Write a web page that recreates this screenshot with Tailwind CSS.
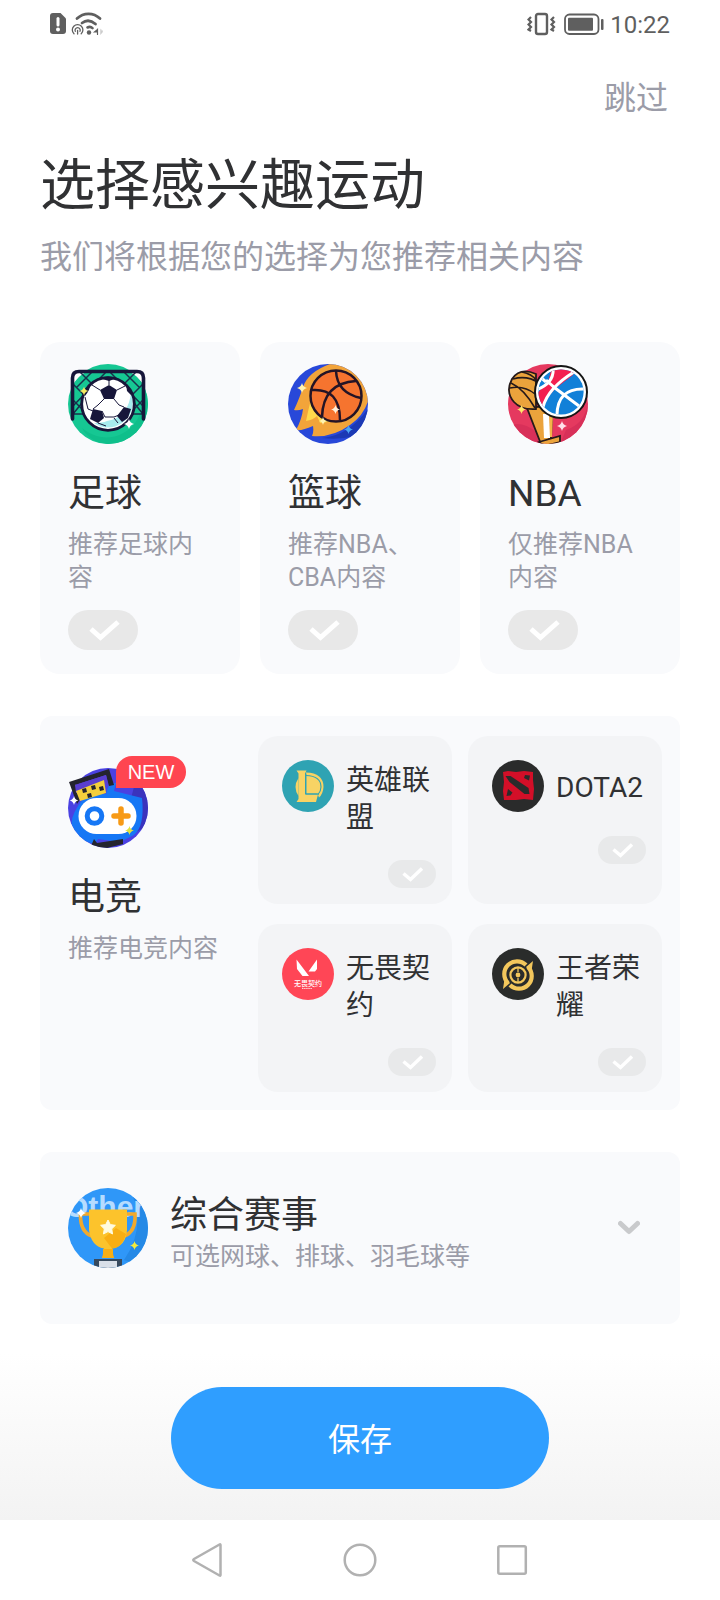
<!DOCTYPE html>
<html lang="zh-CN">
<head>
<meta charset="utf-8">
<meta name="viewport" content="width=device-width, initial-scale=1">
<title>选择感兴趣运动</title>
<script src="https://cdn.jsdelivr.net/npm/@tailwindcss/browser@4"></script>
</head>
<body class="min-h-screen flex flex-col bg-white text-[#303133] font-['Roboto','Noto_Sans_CJK_SC',sans-serif]">

<!-- shared shapes -->
<svg class="absolute size-0" aria-hidden="true">
  <symbol id="spark" viewBox="-5 -5 10 10"><path d="M0-5Q.9-.9 5 0Q.9.9 0 5Q-.9.9-5 0Q-.9-.9 0-5Z" fill="currentColor"/></symbol>
  <clipPath id="disc"><circle cx="40" cy="40" r="40"/></clipPath>
</svg>

<!-- status bar -->
<div class="flex h-12 items-center justify-between pl-12 pr-[50px] text-[#5f5f5f]">
  <div class="flex items-center gap-1">
    <svg class="h-6 w-[19px]" viewBox="0 0 19 24" aria-hidden="true">
      <path d="M5 1h7.500l5.500 5.500V19a3 3 0 0 1-3 3H5a3 3 0 0 1-3-3V4a3 3 0 0 1 3-3z" fill="currentColor"/>
      <path d="M10 6.500v6.500" stroke="#fff" stroke-width="3" stroke-linecap="round"/><circle cx="10" cy="17.500" r="2" fill="#fff"/>
    </svg>
    <svg class="h-6 w-8" viewBox="0 0 32 24" fill="none" stroke="currentColor" stroke-linecap="round" aria-hidden="true">
      <path d="M6 6.500C12.500 .2 22.500 .2 29 6.500" stroke-width="2.800"/>
      <path d="M11 11c4-3 9-2.800 13.500 1" stroke-width="2.800"/>
      <path d="M16.500 15.500c2-1 3.500-.8 5 .6" stroke-width="2.600"/>
      <circle cx="18" cy="20.500" r="2.200" fill="currentColor" stroke="none"/>
      <path d="M3 21.800A5.300 5.300 0 1 1 10.200 21.800" stroke-width="1.300"/>
      <path d="M4.300 19.300A2.600 2.600 0 1 1 9 19.300M6.600 18.500v3.500" stroke-width="1.300"/>
      <path d="M26.500 17v5.500M23.500 20l3-2.500v2.500z" stroke-width="1.200" fill="currentColor"/>
      <path d="M29.500 17.500v5l2.500-3z" stroke="#ccc" fill="#ccc" stroke-width=".5"/>
    </svg>
  </div>
  <div class="flex items-center gap-1.5">
    <svg class="h-6 w-[31px]" viewBox="0 0 31 24" fill="none" stroke="currentColor" aria-hidden="true">
      <rect x="9" y="2" width="11" height="20" rx="2" stroke-width="2.400"/>
      <path d="M4 5L1.500 7.500L4 10L1.500 12.500L4 15L1.500 17.500L4 19" stroke-width="2.200"/>
      <path d="M27 5l-2.500 2.500L27 10l-2.500 2.500L27 15l-2.500 2.500L27 19" stroke-width="2.200"/>
    </svg>
    <svg class="h-6 w-10" viewBox="0 0 40 24" aria-hidden="true">
      <rect x="1" y="2.500" width="33.500" height="19.500" rx="4.500" fill="none" stroke="currentColor" stroke-width="1.800"/>
      <rect x="4" y="5.800" width="25" height="13" rx="1" fill="currentColor"/>
      <rect x="37" y="7" width="2.500" height="11" rx="1" fill="currentColor"/>
    </svg>
    <span class="pt-0.5 text-2xl leading-6">10:22</span>
  </div>
</div>

<main class="px-10 pt-[30px]">
  <div class="flex justify-end pr-3">
    <button type="button" class="text-[32px] leading-10 text-[#9b9ca8]">跳过</button>
  </div>
  <h1 class="mt-[35px] text-[55px] leading-16">选择感兴趣运动</h1>
  <p class="mt-5 text-[32px] leading-10 text-[#9b9ca8]">我们将根据您的选择为您推荐相关内容</p>

  <div class="mt-[65px] grid grid-cols-3 gap-5">
    <!-- football -->
    <label class="flex flex-col items-start rounded-[20px] bg-[#f9fafc] px-7 pb-6 pt-[22px]">
      <svg class="size-20" viewBox="0 0 80 80" aria-hidden="true">
        <circle cx="40" cy="40" r="40" fill="#16c793"/>
        <g clip-path="url(#disc)"><path d="M66 6c12 16 14 44-6 60c-16 12-34 8-46-2c8 16 32 22 50 10s24-46 2-68z" fill="#0fbf8b"/></g>
        <path d="M5 15V10q0-2 3-2h10Q10 12 5 20zM75 15V10q0-2-3-2H62q8 4 13 12z" fill="#fff"/>
        <g fill="none" stroke="#18304b" stroke-width="1.500">
          <path d="M12 8L30 26M24 8L8 24M38 8L5 42M5 20l18 18M5 36l16 16M18 34L5 50M68 8L50 26M56 8l16 16M42 8l33 34M75 20L57 38M75 36L59 52M62 34l13 16M5 50h14M75 50H61"/>
        </g>
        <path d="M4.500 55V14Q4.500 7.500 11 7.500H69Q75.500 7.500 75.500 14V55" fill="none" stroke="#17163a" stroke-width="3.600" stroke-linecap="round"/>
        <circle cx="40" cy="40" r="26" fill="#fff"/>
        <path d="M63 28q6 20-9 31q-14 9-28 0q8 0 13-2q22-4 24-29z" fill="#a7ebee"/>
        <g fill="#17163a">
          <path d="M41 21l8 5-3 9H36l-4-9z"/><path d="M25 45l9 2 2 7-6 5-8-4z"/><path d="M56 43l7 2-3 9-6 4-5-6z"/><path d="M15 30l5-9 3-2q-1 7-6 13zM58 20q6 6 6 12l-5-5zM31 14q9-3 18 0l-8 3z"/>
        </g>
        <path d="M36 35l-6 6-5 4M46 35l5 6 5 2M34 47l3 6h9l5-2M32 26l-8-5M49 26l8-4M41 21v-5M30 59l8 3M46 54l4 5M17 33l3 12 5 2" fill="none" stroke="#17163a" stroke-width="1"/>
        <circle cx="40" cy="40" r="26.300" fill="none" stroke="#17163a" stroke-width="2.800"/>
        <use href="#spark" x="11.500" y="22.500" width="9" height="9" color="#f5e960"/>
        <use href="#spark" x="56" y="55" width="10" height="10" color="#fff"/>
      </svg>
      <span class="mt-[26px] text-[37px] leading-12">足球</span>
      <span class="mt-2.5 text-[25px] leading-[33px] text-[#9b9ca8]">推荐足球内容</span>
      <span class="mt-4 grid h-10 w-[70px]">
        <input type="checkbox" class="col-start-1 row-start-1 appearance-none rounded-full bg-[#e8e8e8] checked:bg-[#2f9eff]">
        <svg class="pointer-events-none col-start-1 row-start-1 size-full" viewBox="0 0 70 40" fill="none" stroke="#fff" stroke-width="5" aria-hidden="true"><path d="M23 19l9.500 8.500L50 12"/></svg>
      </span>
    </label>

    <!-- basketball -->
    <label class="flex flex-col items-start rounded-[20px] bg-[#f9fafc] px-7 pb-6 pt-[22px]">
      <svg class="size-20" viewBox="0 0 80 80" aria-hidden="true">
        <g clip-path="url(#disc)">
          <rect width="80" height="80" fill="#2848d9"/>
          <path d="M80 45Q60 72 34 74Q52 76 66 72L80 60z" fill="#1c39b4"/>
          <path d="M42 0Q20 8 15 23Q12 33 6 46q4 1 9-1q-1 10-7 21q6 1 17-4q1 6-1 10q20 2 38-11Q78 50 82 30L70 8Q60-2 42 0z" fill="#f2a43a"/>
          <path d="M23 35q-3 12-5 22q7-1 11-5q2 4 3 7q7 0 13-3z" fill="#ffd94b"/>
        </g>
        <circle cx="48" cy="32" r="25.500" fill="#f6742f" stroke="#241426" stroke-width="2.500"/>
        <path d="M24 26q28-2 28 30M73 34Q49 29 48 7M68 17Q35 19 34 53" fill="none" stroke="#241426" stroke-width="2.500"/>
        <use href="#spark" x="9" y="19" width="10" height="10" color="#fff3b0"/>
        <use href="#spark" x="43" y="41" width="9" height="9" color="#fff0d8"/>
        <use href="#spark" x="31" y="53" width="8" height="8" color="#fff3b0"/>
        <use href="#spark" x="56" y="61" width="9" height="9" color="#4aa5f5"/>
      </svg>
      <span class="mt-[26px] text-[37px] leading-12">篮球</span>
      <span class="mt-2.5 text-[25px] leading-[33px] text-[#9b9ca8]">推荐NBA、CBA内容</span>
      <span class="mt-4 grid h-10 w-[70px]">
        <input type="checkbox" class="col-start-1 row-start-1 appearance-none rounded-full bg-[#e8e8e8] checked:bg-[#2f9eff]">
        <svg class="pointer-events-none col-start-1 row-start-1 size-full" viewBox="0 0 70 40" fill="none" stroke="#fff" stroke-width="5" aria-hidden="true"><path d="M23 19l9.500 8.500L50 12"/></svg>
      </span>
    </label>

    <!-- NBA -->
    <label class="flex flex-col items-start rounded-[20px] bg-[#f9fafc] px-7 pb-6 pt-[22px]">
      <svg class="size-20" viewBox="0 0 80 80" aria-hidden="true">
        <g clip-path="url(#disc)">
          <rect width="80" height="80" fill="#e5395f"/>
          <path d="M0 62q14-6 28 6l4 14H0zM80 40q-4 20-22 26l-6 14h28z" fill="#d83059"/>
          <path d="M19 44l18-2 7 12-1 20-10 6z" fill="#eba33c" stroke="#261a1a" stroke-width="1.800"/>
          <path d="M35 50h6l1 24h-6z" fill="#fff"/><path d="M42 50l3 0-1 23h-2z" fill="#f5b549"/>
          <path d="M31 78L52 72v6L36 82z" fill="#eba33c" stroke="#261a1a" stroke-width="1.800"/>
        </g>
        <path d="M28 10Q12 3 4 15Q-3 28 6 38q7 8 22 7z" fill="#eba33c" stroke="#261a1a" stroke-width="1.800"/>
        <path d="M5 15q14-4 26 4M2 24q14-3 25 6M3 19q13 6 24 25M14 8q10 2 14 8" fill="none" stroke="#261a1a" stroke-width="1.600"/>
        <circle cx="53" cy="28" r="26" fill="#fff" stroke="#151515" stroke-width="2"/>
        <clipPath id="nbaBall"><circle cx="53" cy="28" r="22.600"/></clipPath>
        <g clip-path="url(#nbaBall)">
          <rect x="28" y="3" width="50" height="50" fill="#1180d8"/>
          <path d="M44 3h24l-3 8L48 24l-9 10-5 10-8-10 14-18z" fill="#f31f50"/>
          <path d="M30 8l13-3-3 14-12 8z" fill="#1180d8"/>
          <path d="M38 16l9 8 28 21M66 8Q40 24 35 43M45 3q2 16-17 23M78 25Q48 23 49 54M30 11l8 7" fill="none" stroke="#fff" stroke-width="3"/>
        </g>
        <use href="#spark" x="9" y="41" width="9" height="9" color="#ffe66b"/>
        <use href="#spark" x="49" y="57" width="10" height="10" color="#ffe1ea"/>
      </svg>
      <span class="mt-[26px] text-[37px] leading-12">NBA</span>
      <span class="mt-2.5 text-[25px] leading-[33px] text-[#9b9ca8]">仅推荐NBA内容</span>
      <span class="mt-4 grid h-10 w-[70px]">
        <input type="checkbox" class="col-start-1 row-start-1 appearance-none rounded-full bg-[#e8e8e8] checked:bg-[#2f9eff]">
        <svg class="pointer-events-none col-start-1 row-start-1 size-full" viewBox="0 0 70 40" fill="none" stroke="#fff" stroke-width="5" aria-hidden="true"><path d="M23 19l9.500 8.500L50 12"/></svg>
      </span>
    </label>
  </div>

  <!-- esports -->
  <section class="mt-[42px] flex rounded-xl bg-[#f9fafc] pb-[18px] pl-7 pr-[18px] pt-5">
    <div class="w-[190px] shrink-0 pt-8">
      <div class="relative w-20">
        <svg class="size-20" viewBox="0 0 80 80" aria-hidden="true">
          <g clip-path="url(#disc)">
            <rect width="80" height="80" fill="#4a41e2"/>
            <path d="M70 4l12 20-2 34-12 6-6-30z" fill="#3a33bd"/>
            <path d="M30 26h8q2-12 10-11l-2 8 28 7q3 28-8 37L52 74 30 71 27 76Q8 72 4 60Q2 50 10 38Q14 29 30 26z" fill="#1677f5"/>
            <path d="M26 71l3 4 26-4v5l-24 6-8-4z" fill="#24242e"/>
          </g>
          <path d="M1 14L41 1l5 16-5 1-3-11L7 17l6 13-4 6z" fill="#24242e"/>
          <path d="M7 17l31-10 2 9-32 9z" fill="#5a3ed0"/>
          <path d="M8 23l28-11 2 13-26 8z" fill="#f4cf3c"/>
          <path d="M14 21l4-1 1 4-4 1zM23 18l4-1 1 4-4 1zM31 19l4-1 1 4-4 1zM19 26l4-1 1 4-4 1z" fill="#24242e"/>
          <rect x="10.500" y="30" width="58" height="36" rx="18" fill="#fff"/>
          <circle cx="26.500" cy="48" r="7.300" fill="none" stroke="#1677f5" stroke-width="5"/>
          <path d="M53 41v14M46 48h14" stroke="#f79a16" stroke-width="5.500" stroke-linecap="round"/>
          <use href="#spark" x="1.500" y="28" width="9" height="9" color="#fff"/>
          <use href="#spark" x="57" y="58" width="9" height="9" color="#e0e23e"/>
        </svg>
        <span class="absolute -top-3 left-12 flex h-8 w-[70px] items-center justify-center rounded-full rounded-bl-none bg-[#ff4550] font-['Liberation_Sans',sans-serif] text-xl text-white">NEW</span>
      </div>
      <h2 class="mt-[26px] text-[37px] leading-12">电竞</h2>
      <p class="mt-2.5 text-[25px] leading-[33px] text-[#9b9ca8]">推荐电竞内容</p>
    </div>
    <div class="grid flex-1 grid-cols-2 gap-x-4 gap-y-5">
      <label class="flex min-h-[168px] flex-col rounded-[20px] bg-[#f3f4f6] pb-4 pl-6 pr-4 pt-6">
        <span class="flex items-start gap-3">
          <svg class="size-[52px] shrink-0" viewBox="0 0 52 52" aria-hidden="true">
            <circle cx="26" cy="26" r="26" fill="#2fa3b3"/>
            <path d="M16.500 18Q10.500 27 16.500 36z" fill="#f8d364"/>
            <path d="M24 12.500Q41.500 13 41.500 27Q41 34 37 37.500L35.500 33.500H24z" fill="#f8d364"/>
            <path d="M24 15.500Q39 16 39 27Q39 31 36 34.500H25" fill="none" stroke="#2fa3b3" stroke-width="1.100"/>
            <path d="M14.500 10.500h10l-1.500 3v21h13L34 42H14.500l2-3V13.500z" fill="#f8d364"/>
            <path d="M24 13.500v20.500H37" fill="none" stroke="#2fa3b3" stroke-width="1"/>
          </svg>
          <span class="flex min-h-[52px] items-center pt-0.5 text-[28px] leading-[37px]">英雄联盟</span>
        </span>
        <span class="mt-6 grid h-7 w-12 self-end">
          <input type="checkbox" class="col-start-1 row-start-1 appearance-none rounded-full bg-[#e8e9ea] checked:bg-[#2f9eff]">
          <svg class="pointer-events-none col-start-1 row-start-1 size-full" viewBox="0 0 48 28" fill="none" stroke="#fff" stroke-width="3.500" aria-hidden="true"><path d="M15.500 13.500l7 6L34 8.500"/></svg>
        </span>
      </label>
      <label class="flex min-h-[168px] flex-col rounded-[20px] bg-[#f3f4f6] pb-4 pl-6 pr-4 pt-6">
        <span class="flex items-start gap-3">
          <svg class="size-[52px] shrink-0" viewBox="0 0 52 52" aria-hidden="true">
            <circle cx="26" cy="26" r="26" fill="#2a2b2b"/>
            <path d="M11 12l5-1 8 1 8-1 9 1 0 8 1 9-1 11-9-1-8 1-12 0-1-9 1-9z" fill="#d30f28"/>
            <path d="M13.500 16l5 0 18 12 1 6-5 0-15-12z" fill="#2a2b2b"/>
            <path d="M33 15l5 .5-1 5-5-2.500zM16 29l4.500 3.500-2 3-4 .5z" fill="#2a2b2b"/>
          </svg>
          <span class="flex min-h-[52px] items-center pt-0.5 text-[28px] leading-[37px]">DOTA2</span>
        </span>
        <span class="mt-6 grid h-7 w-12 self-end">
          <input type="checkbox" class="col-start-1 row-start-1 appearance-none rounded-full bg-[#e8e9ea] checked:bg-[#2f9eff]">
          <svg class="pointer-events-none col-start-1 row-start-1 size-full" viewBox="0 0 48 28" fill="none" stroke="#fff" stroke-width="3.500" aria-hidden="true"><path d="M15.500 13.500l7 6L34 8.500"/></svg>
        </span>
      </label>
      <label class="flex min-h-[168px] flex-col rounded-[20px] bg-[#f3f4f6] pb-4 pl-6 pr-4 pt-6">
        <span class="flex items-start gap-3">
          <svg class="size-[52px] shrink-0" viewBox="0 0 52 52" aria-hidden="true">
            <circle cx="26" cy="26" r="26" fill="#ff4656"/>
            <path d="M14.500 11.500L27 28H20.500L15 21zM35 11.500V21l-2 2.500h-6.500z" fill="#fff"/>
            <text x="26" y="38" text-anchor="middle" font-family="Noto Sans CJK SC" font-weight="500" font-size="7" fill="#fff">无畏契约</text>
            <path d="M20 40.500h10" stroke="#ffd5d9" stroke-width="1.200" stroke-dasharray="1.500 .6"/>
          </svg>
          <span class="flex min-h-[52px] items-center pt-0.5 text-[28px] leading-[37px]">无畏契约</span>
        </span>
        <span class="mt-6 grid h-7 w-12 self-end">
          <input type="checkbox" class="col-start-1 row-start-1 appearance-none rounded-full bg-[#e8e9ea] checked:bg-[#2f9eff]">
          <svg class="pointer-events-none col-start-1 row-start-1 size-full" viewBox="0 0 48 28" fill="none" stroke="#fff" stroke-width="3.500" aria-hidden="true"><path d="M15.500 13.500l7 6L34 8.500"/></svg>
        </span>
      </label>
      <label class="flex min-h-[168px] flex-col rounded-[20px] bg-[#f3f4f6] pb-4 pl-6 pr-4 pt-6">
        <span class="flex items-start gap-3">
          <svg class="size-[52px] shrink-0" viewBox="0 0 52 52" aria-hidden="true">
            <circle cx="26" cy="26" r="26" fill="#2a2c2b"/>
            <g fill="none" stroke="#f3c75c">
              <path d="M16 35A12.500 12.500 0 0 1 34 17" stroke-width="4.200"/>
              <path d="M36 19A12.500 12.500 0 0 1 18 37" stroke-width="4.200"/>
              <circle cx="26" cy="27" r="7.600" stroke-width="2.200"/>
              <path d="M26 20v4M26 30v4" stroke-width="1.300"/>
            </g>
            <path d="M34 19l7-6-1.500 10-3-1zM18 35l-7 6 1.500-10 3 1z" fill="#f3c75c"/>
            <circle cx="26" cy="27" r="2.400" fill="#f3c75c"/>
          </svg>
          <span class="flex min-h-[52px] items-center pt-0.5 text-[28px] leading-[37px]">王者荣耀</span>
        </span>
        <span class="mt-6 grid h-7 w-12 self-end">
          <input type="checkbox" class="col-start-1 row-start-1 appearance-none rounded-full bg-[#e8e9ea] checked:bg-[#2f9eff]">
          <svg class="pointer-events-none col-start-1 row-start-1 size-full" viewBox="0 0 48 28" fill="none" stroke="#fff" stroke-width="3.500" aria-hidden="true"><path d="M15.500 13.500l7 6L34 8.500"/></svg>
        </span>
      </label>
    </div>
  </section>

  <!-- other events -->
  <button type="button" aria-expanded="false" class="mt-[42px] flex w-full items-start gap-[22px] rounded-xl bg-[#f9fafc] pb-[51px] pl-7 pr-10 pt-9 text-left">
    <svg class="size-20 shrink-0" viewBox="0 0 80 80" aria-hidden="true">
      <g clip-path="url(#disc)">
        <rect width="80" height="80" fill="#2f97f8"/>
        <path d="M64 6q14 34-8 66l26 8V10z" fill="#2589e6"/>
        <text x="37" y="29" text-anchor="middle" font-family="Liberation Sans" font-weight="700" font-size="30" fill="#b5dcff">Other</text>
        <path d="M26 71h28v12H26z" fill="#384a5e"/><path d="M31 73h18v10H31z" fill="#d9dfe8"/>
      </g>
      <path d="M23 26H12.500Q12 44 24 48M56 26h11Q68 44 56 48" fill="none" stroke="#f2a92c" stroke-width="3.600"/>
      <path d="M21 21.500H59V42Q58 58 44 60.500V66l2 4H34l2-4V60.500Q23 58 21 42z" fill="#fcc32c"/>
      <path d="M48 40l10 6Q54 60 44 60.500L36 50z" fill="#f8ae14"/>
      <path d="M35 61h10v5l1 4H34l1-4z" fill="#f8ae14"/>
      <path d="M40 32l2.300 4.600 5.100.7-3.700 3.600.9 5.100-4.600-2.400-4.600 2.400.9-5.100-3.700-3.600 5.100-.7z" fill="#fffbe0" stroke="#fffbe0" stroke-width="1"/>
      <use href="#spark" x="8" y="20" width="10" height="10" color="#fff"/>
      <use href="#spark" x="62" y="53" width="9" height="9" color="#f4ea3c"/>
    </svg>
    <span class="flex flex-1 flex-col pt-1">
      <span class="text-[37px] leading-12">综合赛事</span>
      <span class="text-[25px] leading-[33px] text-[#9b9ca8]">可选网球、排球、羽毛球等</span>
    </span>
    <svg class="h-20 w-[22px] shrink-0" viewBox="0 0 22 80" fill="none" stroke="#c9cacc" stroke-width="5" stroke-linecap="round" stroke-linejoin="round" aria-hidden="true"><path d="M2.500 35.500L11 43.500L19.500 35.500"/></svg>
  </button>
</main>

<footer class="mt-auto">
  <div class="flex justify-center bg-linear-to-b from-white from-15% to-[#f3f3f3] px-10 pb-[31px] pt-[63px]">
    <button type="button" class="h-[102px] w-full max-w-[378px] rounded-full bg-[#2f9eff] pt-1 text-[32px] text-white">保存</button>
  </div>
  <nav class="flex h-20 items-center justify-center gap-[116px] bg-white" aria-label="系统导航">
    <button type="button" aria-label="返回"><svg class="size-9" viewBox="0 0 36 36" fill="none" stroke="#b1b1b1" stroke-width="2.500" stroke-linejoin="round"><path d="M30.500 3v30q0 1-1 .5L4 19q-1.500-1 0-2L29.500 2.500q1-.5 1 .5z"/></svg></button>
    <button type="button" aria-label="主页"><svg class="size-9" viewBox="0 0 36 36" fill="none" stroke="#b1b1b1" stroke-width="2.500"><circle cx="18" cy="18" r="15.300"/></svg></button>
    <button type="button" aria-label="最近任务"><svg class="size-9" viewBox="0 0 36 36" fill="none" stroke="#b1b1b1" stroke-width="2.500"><rect x="4.300" y="4.300" width="27.500" height="27.500" rx="1.500"/></svg></button>
  </nav>
</footer>
</body>
</html>
